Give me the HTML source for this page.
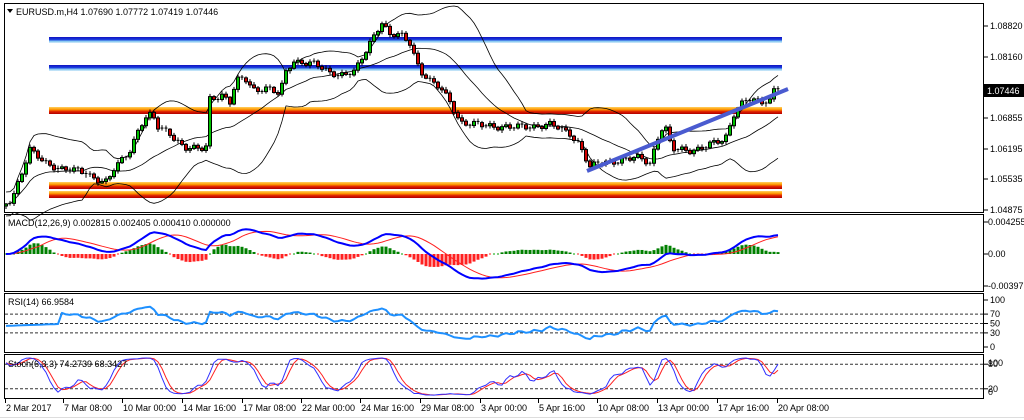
<!DOCTYPE html>
<html><head><meta charset="utf-8">
<style>
html,body{margin:0;padding:0;background:#fff;width:1024px;height:420px;overflow:hidden}
svg{display:block;font-family:"Liberation Sans",sans-serif}
</style></head>
<body>
<svg id="s" width="1024" height="420" xmlns="http://www.w3.org/2000/svg">
<rect width="1024" height="420" fill="#fff"/>
<defs>
<linearGradient id="gb" x1="0" y1="0" x2="0" y2="1">
<stop offset="0" stop-color="#1010c0"/><stop offset="0.45" stop-color="#1a3fe0"/><stop offset="0.7" stop-color="#7fc4f0"/><stop offset="1" stop-color="#d8eefa"/></linearGradient>
<linearGradient id="go" x1="0" y1="0" x2="0" y2="1">
<stop offset="0" stop-color="#ffd060"/><stop offset="0.35" stop-color="#ff9a00"/><stop offset="0.65" stop-color="#e02000"/><stop offset="1" stop-color="#b00000"/></linearGradient>
</defs>
<g id="g"></g>
</svg>
<script>
(function(){
var S='';
function L(x1,y1,x2,y2,c,w,extra){S+='<line x1="'+x1+'" y1="'+y1+'" x2="'+x2+'" y2="'+y2+'" stroke="'+c+'" stroke-width="'+(w||1)+'" '+(extra||'')+'/>';}
function T(x,y,t,a,c,fs){S+='<text x="'+x+'" y="'+y+'" font-size="'+(fs||9)+'" fill="'+(c||'#000')+'"'+(a?' text-anchor="'+a+'"':'')+'>'+t+'</text>';}
function R(x,y,w,h,f,st){S+='<rect x="'+x+'" y="'+y+'" width="'+w+'" height="'+h+'" fill="'+f+'"'+(st?' stroke="'+st+'" stroke-width="1"':'')+'/>';}
function P(pts,c,w){S+='<polyline fill="none" stroke="'+c+'" stroke-width="'+w+'" stroke-linejoin="round" points="'+pts.map(function(p){return p[0].toFixed(1)+','+p[1].toFixed(1)}).join(' ')+'"/>';}
R(4.5,3.5,979,209,'#fff','#000');
R(4.5,214.5,979,77,'#fff','#000');
R(4.5,293.5,979,59,'#fff','#000');
R(4.5,354.5,979,44,'#fff','#000');
L(0,417.5,1024,417.5,'#ddd',1);
var K=[[5,205],[12,198],[22,172],[30,150],[35,155],[45,163],[60,168],[70,170],[85,173],[100,180],[108,182],[112,172],[120,163],[130,150],[140,125],[148,115],[153,117],[158,128],[170,133],[185,148],[200,150],[208,145],[210,98],[222,95],[232,105],[235,82],[245,78],[255,90],[265,88],[280,95],[285,73],[293,60],[300,62],[315,65],[330,72],[345,75],[355,72],[360,63],[370,42],[378,28],[382,22],[390,36],[400,35],[410,42],[420,70],[430,82],[440,88],[450,100],[460,122],[470,125],[490,125],[510,128],[530,126],[550,125],[570,133],[580,145],[590,168],[600,163],[620,160],[640,158],[650,163],[660,130],[665,126],[672,150],[690,150],[700,148],[710,145],[725,140],[735,110],[745,100],[760,103],[770,100],[776,82],[780,90]];
function interp(x){for(var i=0;i<K.length-1;i++){if(x<=K[i+1][0]){var t=(x-K[i][0])/(K[i+1][0]-K[i][0]);return K[i][1]+t*(K[i+1][1]-K[i][1]);}}return K[K.length-1][1];}
var N=194,X=[],C=[],O=[],H=[],Lo=[],i,j;
for(i=0;i<N;i++){var x=6+i*4;X.push(x);C.push(interp(x)+2.5*Math.sin(i*1.7)+1.5*Math.sin(i*0.63));}
for(i=0;i<N;i++){O.push(i?C[i-1]:C[0]+2);H.push(Math.min(O[i],C[i])-1-Math.abs(2*Math.sin(i*2.3)));Lo.push(Math.max(O[i],C[i])+1+Math.abs(2*Math.cos(i*1.9)));}
function lvl(y,g,h){R(49,y,733,h,'url(#'+g+')');}
lvl(37,'gb',6);lvl(65,'gb',6);lvl(107,'go',7);lvl(182,'go',7);lvl(191,'go',7);
var mid=[],up=[],dn=[];
for(i=0;i<N;i++){var n=Math.min(20,i+1),s=0;for(j=i-n+1;j<=i;j++)s+=C[j];var m=s/n,v=0;for(j=i-n+1;j<=i;j++)v+=(C[j]-m)*(C[j]-m);var sd=Math.max(Math.sqrt(v/n),6);mid.push([X[i],m]);up.push([X[i],m-2*sd]);dn.push([X[i],m+2*sd]);}
P(mid,'#000',0.8);P(up,'#000',0.8);P(dn,'#000',0.8);
for(i=0;i<N;i++){var cx=X[i];L(cx,H[i],cx,Lo[i],'#000',1);var bt=Math.min(O[i],C[i]),bh=Math.max(1,Math.abs(C[i]-O[i]));
if(bh<1.5){L(cx-1.5,bt,cx+1.5,bt,'#000',1);}else R(cx-1.5,bt,3,bh,C[i]<O[i]?'#00c000':'#d00000','#000');}
L(587,171,788,89,'#4a5bd0',4);
var pl=[[26,'1.08820'],[57,'1.08160'],[118,'1.06855'],[149,'1.06195'],[179,'1.05535'],[210,'1.04875']];
pl.forEach(function(p){L(984,p[0],988,p[0],'#000');T(990,p[0]+3,p[1]);});
R(984,84,40,13,'#000');T(987,94,'1.07446','start','#fff');
T(16,15,'EURUSD.m,H4  1.07690 1.07772 1.07419 1.07446');
S+='<polygon points="7,9 13,9 10,13" fill="#000"/>';
function ema(a,p){var k=2/(p+1),r=[a[0]];for(var i=1;i<a.length;i++)r.push(a[i]*k+r[i-1]*(1-k));return r;}
var pr=C.map(function(y){return 1.0882-(y-26)/4664;});
var e12=ema(pr,12),e26=ema(pr,26),mac=e12.map(function(v,i){return v-e26[i]});
var sig=[];for(i=0;i<N;i++){var n2=Math.min(9,i+1),s2=0;for(j=i-n2+1;j<=i;j++)s2+=mac[j];sig.push(s2/n2);}
var zy=254,f=6500;
for(i=0;i<N;i++){var hv=(mac[i]-sig[i])*f*1.1;if(Math.abs(hv)<1.2){R(X[i]-1,zy-0.5,2,1,hv>=0?'#00a000':'#ff2020');}else if(hv>0)R(X[i]-1.5,zy-hv,3,hv,'#008000');else R(X[i]-1.5,zy,3,-hv,'#ff2020');}
P(sig.map(function(v,i){return[X[i],Math.max(216,Math.min(290,zy-v*f))]}),'#ff2020',1);
P(mac.map(function(v,i){return[X[i],Math.max(216,Math.min(290,zy-v*f))]}),'#0000ff',2);
T(8,226,'MACD(12,26,9) 0.002815 0.002405 0.000410 0.000000');
[[222,'0.004255'],[254,'0.00'],[286,'-0.003971']].forEach(function(p){L(984,p[0],988,p[0],'#000');T(988,p[0]+3,p[1]);});
var ag=0,al=0,rsi=[];
for(i=0;i<N;i++){var d=i?pr[i]-pr[i-1]:0;var gg=Math.max(d,0),ll=Math.max(-d,0);if(i<14){ag=(ag*i+gg)/(i+1);al=(al*i+ll)/(i+1);rsi.push(45+i*0.3);}else{ag=(ag*13+gg)/14;al=(al*13+ll)/14;rsi.push(al==0?60:100-100/(1+ag/al));}}
function ry(v){return 347-v*0.47;}
[70,50,30].forEach(function(v){L(5,ry(v),983,ry(v),'#333',1,'stroke-dasharray="3,2"');});
P(rsi.map(function(v,i){return[X[i],ry(v)]}),'#1e90ff',2);
T(8,305,'RSI(14) 66.9584');
[[100,'100'],[70,'70'],[50,'50'],[30,'30'],[0,'0']].forEach(function(p){L(984,ry(p[0]),988,ry(p[0]),'#000');T(990,ry(p[0])+3,p[1]);});
var kk=[];for(i=0;i<N;i++){var a=Math.max(0,i-5),hh=1e9,lw=-1e9;for(j=a;j<=i;j++){hh=Math.min(hh,H[j]);lw=Math.max(lw,Lo[j]);}kk.push(lw==hh?50:(lw-C[i])/(lw-hh)*100);}
function sma(a,p){var r=[];for(var i=0;i<a.length;i++){var n=Math.min(p,i+1),s=0;for(var j=i-n+1;j<=i;j++)s+=a[j];r.push(s/n);}return r;}
var sk=sma(kk,3),sd2=sma(sk,3);
function sy(v){return 397-v*0.41;}
[80,20].forEach(function(v){L(5,sy(v),983,sy(v),'#333',1,'stroke-dasharray="3,2"');});
P(sd2.map(function(v,i){return[X[i],sy(v)]}),'#ff2020',1);
P(sk.map(function(v,i){return[X[i],sy(v)]}),'#3030ff',1);
T(8,367,'Stoch(6,3,3) 74.2739 68.3427');
T(988,366,'100');T(988,367,'80');T(988,392,'20');T(988,395,'0');
L(984,sy(80),988,sy(80),'#000');L(984,sy(20),988,sy(20),'#000');
[[5,'2 Mar 2017'],[63,'7 Mar 08:00'],[122,'10 Mar 00:00'],[182,'14 Mar 16:00'],[242,'17 Mar 08:00'],[301,'22 Mar 00:00'],[360,'24 Mar 16:00'],[420,'29 Mar 08:00'],[480,'3 Apr 00:00'],[538,'5 Apr 16:00'],[597,'10 Apr 08:00'],[657,'13 Apr 00:00'],[717,'17 Apr 16:00'],[777,'20 Apr 08:00']].forEach(function(p){L(p[0]+0.5,399,p[0]+0.5,403,'#000');T(p[0]+1,411,p[1]);});
document.getElementById('g').innerHTML=S;
})();
</script>
</body></html>
